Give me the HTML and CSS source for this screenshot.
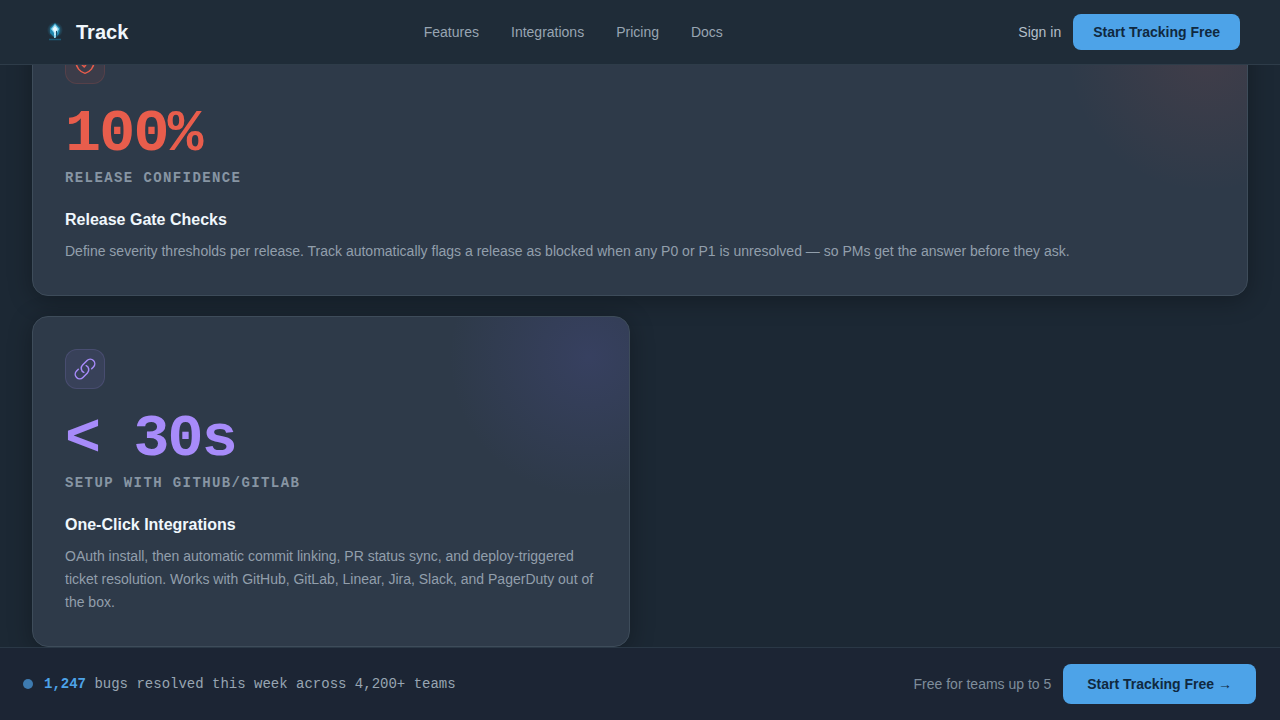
FILE: index.html
```html
<!DOCTYPE html>
<html lang="en">
<head>
    <meta charset="UTF-8">
    <meta name="viewport" content="width=device-width, initial-scale=1.0">
    <title>Track</title>
    <link rel="stylesheet" href="styles.css">
</head>
<body>
    <header class="navbar">
        <a href="#" class="logo">
            <svg class="logo-mark" viewBox="0 0 28 28" aria-hidden="true">
                <defs>
                    <radialGradient id="logoGlow">
                        <stop offset="0" stop-color="#2ba3cf" stop-opacity="0.8"/>
                        <stop offset="1" stop-color="#2ba3cf" stop-opacity="0"/>
                    </radialGradient>
                </defs>
                <circle cx="15" cy="12" r="8" fill="url(#logoGlow)"/>
                <path d="M15 5 L20 10 L19 16 L16 19 L14 19 L10 15 L10 10 Z" fill="#1f86ad"/>
                <path d="M15 6 L19 11 L17 15 L17 17 L15.5 20 H14 V15 L11 11 Z" fill="#8fd8f0"/>
                <path d="M15 8 L17.5 11 L15.5 14 V17 H14.5 V14 L12.5 11 Z" fill="#eafaff"/>
                <path d="M16.5 13 V19" stroke="#1c4a63" stroke-width="1"/>
                <path d="M9 21.5 H21" stroke="#1d5a76" stroke-width="1.5"/>
            </svg>
            <span>Track</span>
        </a>
        <nav class="nav-links">
            <a href="#features">Features</a>
            <a href="#integrations">Integrations</a>
            <a href="#pricing">Pricing</a>
            <a href="#docs">Docs</a>
        </nav>
        <div class="nav-actions">
            <a href="#signin" class="sign-in">Sign in</a>
            <button type="button" class="btn">Start Tracking Free</button>
        </div>
    </header>

    <main class="features" id="features">
        <article class="card card-wide card-red">
            <div class="card-icon">
                <svg viewBox="0 0 24 24" aria-hidden="true">
                    <path d="M9 12.75 11.25 15 15 9.75m-3-7.036A11.959 11.959 0 0 1 3.598 6 11.99 11.99 0 0 0 3 9.749c0 5.592 3.824 10.29 9 11.623 5.176-1.332 9-6.03 9-11.622 0-1.31-.21-2.571-.598-3.751h-.152c-3.196 0-6.1-1.248-8.25-3.285Z"/>
                </svg>
            </div>
            <div class="stat">100%</div>
            <div class="stat-label">Release confidence</div>
            <h3>Release Gate Checks</h3>
            <p>Define severity thresholds per release. Track automatically flags a release as blocked when any P0 or P1 is unresolved — so PMs get the answer before they ask.</p>
        </article>
        <article class="card card-purple">
            <div class="card-icon">
                <svg viewBox="0 0 24 24" aria-hidden="true">
                    <path d="M13.19 8.688a4.5 4.5 0 0 1 1.242 7.244l-4.5 4.5a4.5 4.5 0 0 1-6.364-6.364l1.757-1.757m13.35-.622 1.757-1.757a4.5 4.5 0 0 0-6.364-6.364l-4.5 4.5a4.5 4.5 0 0 0 1.242 7.244"/>
                </svg>
            </div>
            <div class="stat">&lt; 30s</div>
            <div class="stat-label">Setup with GitHub/GitLab</div>
            <h3>One-Click Integrations</h3>
            <p>OAuth install, then automatic commit linking, PR status sync, and deploy-triggered ticket resolution. Works with GitHub, GitLab, Linear, Jira, Slack, and PagerDuty out of the box.</p>
        </article>
    </main>

    <div class="sticky-bar">
        <div class="ticker">
            <span class="ticker-dot"></span>
            <span><strong>1,247</strong> bugs resolved this week across 4,200+ teams</span>
        </div>
        <div class="bar-actions">
            <span class="bar-note">Free for teams up to 5</span>
            <button type="button" class="btn btn-large">Start Tracking Free →</button>
        </div>
    </div>
</body>
</html>
```
FILE: styles.css
```css
* {
    box-sizing: border-box;
}
body {
    margin: 0;
    background-color: #1c2834;
    color: #f0f7fc;
    font-family: "Liberation Sans", Arial, sans-serif;
    font-size: 14px;
}
a {
    color: inherit;
    text-decoration: none;
}

/* Navbar */
.navbar {
    position: fixed;
    top: 0;
    left: 0;
    right: 0;
    z-index: 10;
    display: flex;
    align-items: center;
    justify-content: space-between;
    height: 65px;
    padding: 0 40px;
    background-color: #1f2c38;
    border-bottom: 1px solid #2e3c49;
}
.logo {
    display: flex;
    align-items: center;
    gap: 8px;
    font-size: 20px;
    font-weight: bold;
}
.logo-mark {
    width: 28px;
    height: 28px;
}
.nav-links {
    display: flex;
    gap: 32px;
    color: #98a5b2;
}
.nav-actions {
    display: flex;
    align-items: center;
    gap: 12px;
}
.sign-in {
    color: #b4bfca;
}
.btn {
    height: 36px;
    padding: 0 20px;
    border: none;
    border-radius: 8px;
    background-color: #4da3e8;
    color: #10293f;
    font-family: inherit;
    font-size: 14px;
    font-weight: bold;
    cursor: pointer;
}
.btn-large {
    height: 40px;
    padding: 0 24px;
}

/* Feature cards */
.features {
    display: grid;
    grid-template-columns: 1fr 1fr;
    gap: 20px;
    padding: 11px 32px 80px;
}
.card {
    padding: 32px;
    border: 1px solid #3e4c5a;
    border-radius: 16px;
    background-color: #2e3a49;
    background-image: radial-gradient(circle at calc(100% - 40px) 40px, var(--glow), transparent 140px);
    box-shadow: 0 4px 24px rgba(0, 0, 0, 0.3);
}
.card-wide {
    grid-column: 1 / -1;
}
.card-red {
    --accent: #e85d4c;
    --glow: rgba(232, 93, 76, 0.1);
    --tint: rgba(232, 93, 76, 0.08);
    --line: rgba(232, 93, 76, 0.15);
}
.card-purple {
    --accent: #a78bfa;
    --glow: rgba(96, 92, 200, 0.18);
    --tint: rgba(167, 139, 250, 0.09);
    --line: rgba(167, 139, 250, 0.15);
}
.card-icon {
    display: flex;
    align-items: center;
    justify-content: center;
    width: 40px;
    height: 40px;
    margin-bottom: 20px;
    border: 1px solid var(--line);
    border-radius: 12px;
    background-color: var(--tint);
}
.card-icon svg {
    width: 24px;
    height: 24px;
    flex-shrink: 0;
    fill: none;
    stroke: var(--accent);
    stroke-width: 1.5;
    stroke-linecap: round;
    stroke-linejoin: round;
}
.stat {
    margin-bottom: 4px;
    color: var(--accent);
    font-family: "Liberation Mono", monospace;
    font-size: 60px;
    font-weight: bold;
    line-height: 60px;
    letter-spacing: -0.03em;
}
.stat-label {
    margin-bottom: 20px;
    color: #8795a3;
    font-family: "Liberation Mono", monospace;
    font-weight: bold;
    line-height: 20px;
    letter-spacing: 0.1em;
    text-transform: uppercase;
}
.card h3 {
    margin: 0 0 8px;
    font-size: 16px;
    line-height: 24px;
}
.card p {
    margin: 0;
    color: #929fac;
    line-height: 23px;
}

/* Bottom bar */
.sticky-bar {
    position: fixed;
    left: 0;
    right: 0;
    bottom: 0;
    z-index: 10;
    display: flex;
    align-items: center;
    justify-content: space-between;
    padding: 16px 24px;
    background-color: #1c2534;
    border-top: 1px solid #2a3846;
}
.ticker {
    display: flex;
    align-items: center;
    gap: 12px;
    color: #98a5b2;
    font-family: "Liberation Mono", monospace;
}
.ticker strong {
    color: #4da3e8;
}
.ticker-dot {
    width: 8px;
    height: 8px;
    border-radius: 50%;
    background-color: #3e7bb0;
    box-shadow: 0 0 0 1px #3e7bb0;
}
.bar-actions {
    display: flex;
    align-items: center;
    gap: 12px;
}
.bar-note {
    color: #7f8d9b;
}
```
